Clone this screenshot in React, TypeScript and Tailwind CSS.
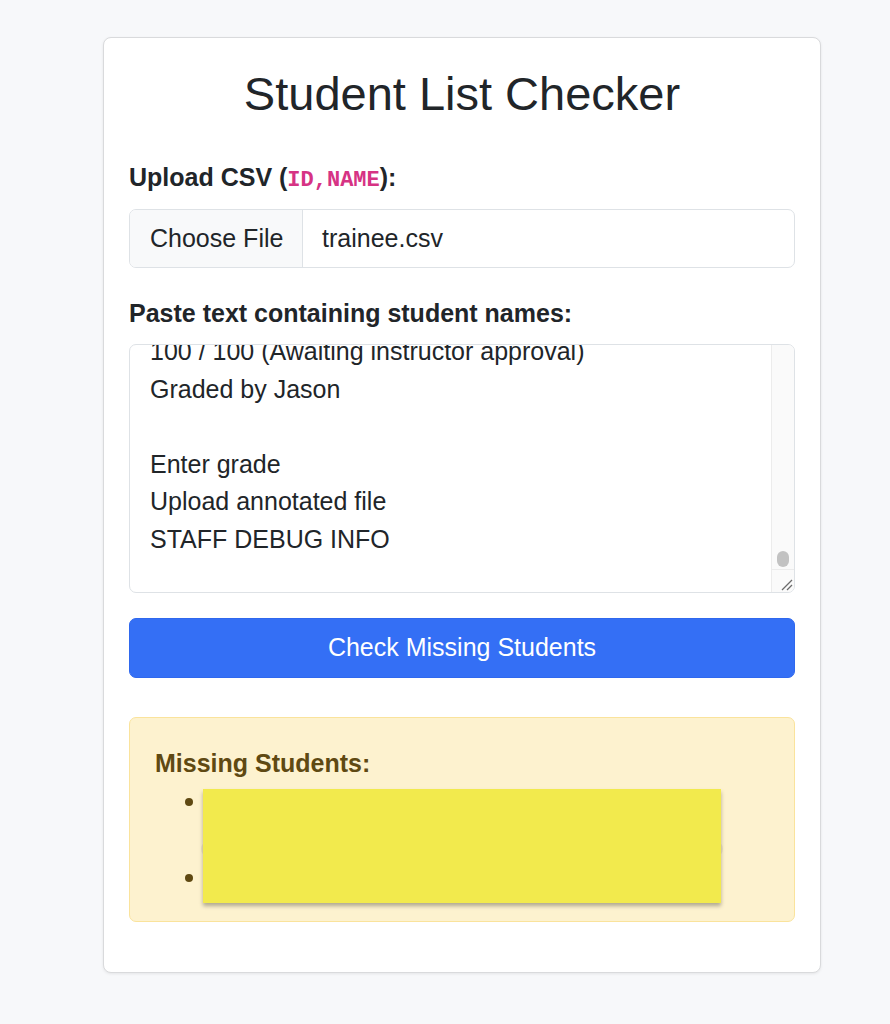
const pastedLines = [
  '100 / 100 (Awaiting instructor approval)',
  'Graded by Jason',
  '',
  'Enter grade',
  'Upload annotated file',
  'STAFF DEBUG INFO',
];

function ScrollColumn() {
  return (
    <div className="flex w-[23px] flex-col border-l border-[#ececec] bg-[#fafafa]">
      <div className="flex flex-1 items-end justify-center pb-[2px]">
        <div className="h-[16px] w-[12px] rounded-full bg-[#c2c2c2]" />
      </div>
      <div className="relative h-[23px] border-t border-[#ececec]">
        <svg width="22" height="22" viewBox="0 0 22 22" className="absolute right-0 bottom-0">
          <path d="M10 20 L20 10" stroke="#6b6b6b" strokeWidth="1.2" />
          <path d="M15 20 L20 15" stroke="#6b6b6b" strokeWidth="1.2" />
        </svg>
      </div>
    </div>
  );
}

export default function App() {
  return (
    <div
      className="min-h-screen bg-[#f7f8fa] pt-[37px] pb-[52px] text-[#212529]"
      style={{ fontFamily: '"Liberation Sans", Arial, sans-serif' }}
    >
      <div className="ml-[103px] w-[718px] rounded-[8px] border border-[#d9dadc] bg-white px-[25px] pt-[28px] pb-[50px] shadow-[0_1px_3px_rgba(0,0,0,0.08)]">
        <h1 className="text-center text-[47px] leading-[56px] font-normal">Student List Checker</h1>

        <label className="mt-[40px] block h-[30px] text-[25px] leading-[30px] font-bold">
          Upload CSV (
          <code
            className="text-[22px] leading-[0] font-bold text-[#d63384]"
            style={{ fontFamily: '"Liberation Mono", monospace' }}
          >
            ID,NAME
          </code>
          ):
        </label>

        <div className="mt-[17px] flex h-[59px] overflow-hidden rounded-[7px] border border-[#dee2e6] text-[25px]">
          <div className="flex w-[173px] items-center border-r border-[#dee2e6] bg-[#f8f9fa] pl-[20px]">Choose File</div>
          <div className="flex items-center pl-[19px]">trainee.csv</div>
        </div>

        <label className="mt-[30px] block h-[30px] text-[25px] leading-[30px] font-bold">
          Paste text containing student names:
        </label>

        <div className="mt-[16px] flex h-[249px] overflow-hidden rounded-[7px] border border-[#dee2e6]">
          <div className="flex-1 overflow-hidden px-[20px]">
            <div className="mt-[-12px] text-[25px] leading-[37.6px]">
              {pastedLines.map((line, i) => (
                <div key={i} className="h-[37.6px] whitespace-pre">
                  {line}
                </div>
              ))}
            </div>
          </div>
          <ScrollColumn />
        </div>

        <button className="mt-[25px] flex h-[60px] w-full items-center justify-center rounded-[7px] border border-[#2f68ee] bg-[#346ff5] text-[25px] text-white">
          Check Missing Students
        </button>

        <div className="relative mt-[39px] rounded-[7px] border border-[#fae39c] bg-[#fdf2cf] pt-[30px] pr-[25px] pb-[25px] pl-[25px] text-[#5f4912]">
          <h5 className="text-[25px] leading-[30px] font-bold">Missing Students:</h5>
          <ul className="mt-[4px] pl-[30px]">
            <li className="flex h-[76px] items-start">
              <span className="mt-[15.5px] h-[8px] w-[8px] rounded-full bg-[#5f4912]" />
            </li>
            <li className="flex h-[38px] items-start">
              <span className="mt-[15.5px] h-[8px] w-[8px] rounded-full bg-[#5f4912]" />
            </li>
          </ul>
          <div className="absolute top-[122px] left-[71px] h-[18px] w-[522px] rounded-full bg-[rgba(0,0,0,0.06)]" />
          <div className="absolute top-[71px] left-[73px] h-[114px] w-[518px] bg-[#f2ea4d] shadow-[0_3px_4px_rgba(0,0,0,0.3)]" />
        </div>
      </div>
    </div>
  );
}
